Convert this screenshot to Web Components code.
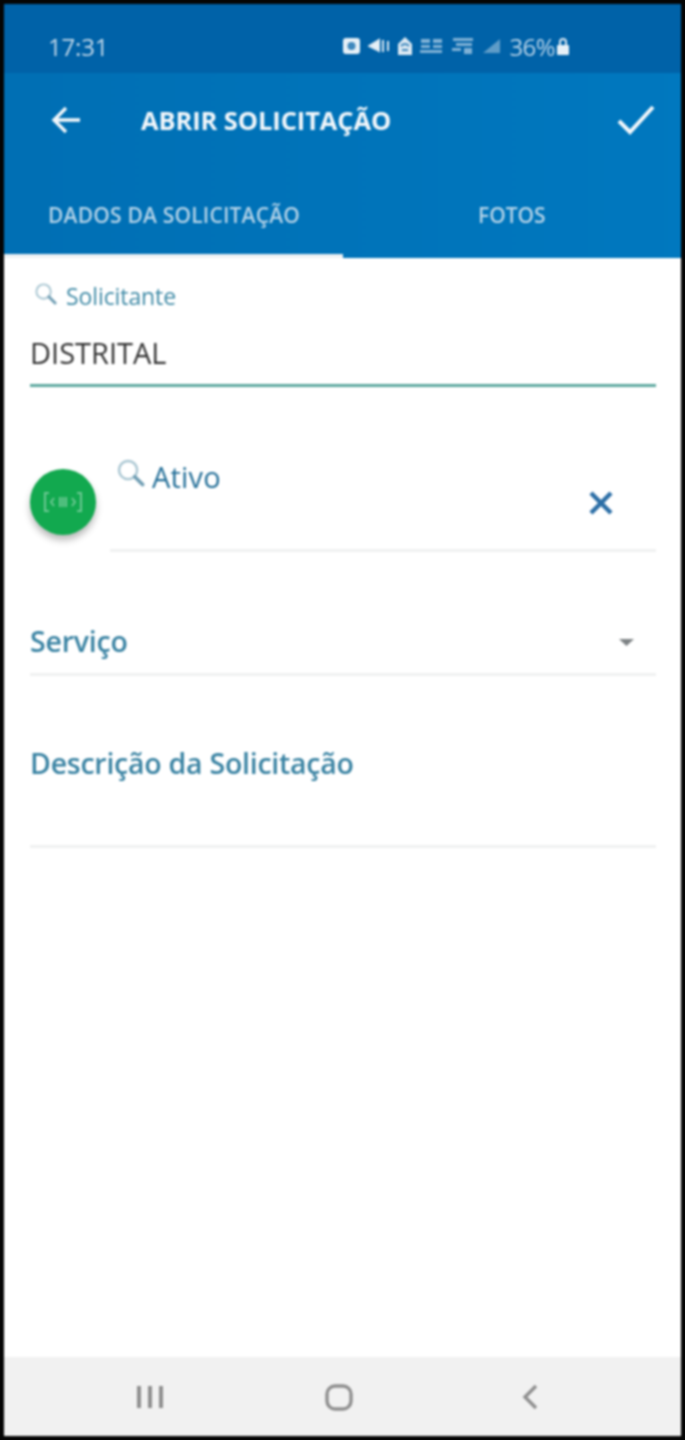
<!DOCTYPE html>
<html lang="pt">
<head>
<meta charset="utf-8">
<title>Abrir Solicitação</title>
<style>
  html, body { margin: 0; height: 100%; background: #000; }
  body { font-family: "Open Sans", "Liberation Sans", sans-serif; }
  app-screen { height: 1440px; }
</style>
</head>
<body>
<app-screen>
  <status-bar slot="header"></status-bar>
  <app-bar slot="header" title="ABRIR SOLICITAÇÃO"></app-bar>
  <tab-bar slot="header"></tab-bar>

  <form-field label="Solicitante" value="DISTRITAL"></form-field>
  <asset-field></asset-field>
  <select-field label="Serviço"></select-field>
  <text-area-field label="Descrição da Solicitação"></text-area-field>

  <nav-bar slot="footer"></nav-bar>
</app-screen>

<script>
// lupa usada nos rotulos de busca
const searchIcon = (size) => `
  <svg width="${size}" height="${size}" viewBox="0 0 24 24" fill="none" stroke-linecap="round">
    <circle cx="10" cy="10" r="7.5" stroke="#a9c6d2" stroke-width="2"/>
    <path d="M15.5 15.5 L22 22" stroke="#6f9db3" stroke-width="3"/>
  </svg>`;

class AppScreen extends HTMLElement {
  constructor() {
    super();
    const shadow = this.attachShadow({ mode: 'open' });
    shadow.innerHTML = `
      <style>
        :host {
          display: block;
          box-sizing: border-box;
          padding: 4px;
          background: #050505;
        }
        .frame {
          height: 100%;
          display: flex;
          flex-direction: column;
          /* a referencia e uma captura ampliada, toda levemente desfocada */
          filter: blur(0.9px);
        }
        .content {
          flex: 1;
          background: #fff;
          display: flex;
          flex-direction: column;
        }
      </style>
      <div class="frame">
        <slot name="header"></slot>
        <div class="content"><slot></slot></div>
        <slot name="footer"></slot>
      </div>
    `;
  }
}

class StatusBar extends HTMLElement {
  constructor() {
    super();
    const shadow = this.attachShadow({ mode: 'open' });
    shadow.innerHTML = `
      <style>
        :host {
          display: flex;
          align-items: center;
          box-sizing: border-box;
          height: 69px;
          padding: 15px 111px 0 44px;
          background: #0062a8;
          color: #c3d9ea;
          font-size: 24px;
        }
        .time { flex: 1; letter-spacing: -0.2px; }
        .icons { display: flex; align-items: center; gap: 7px; }
        svg { display: block; }
        .pct { font-size: 24px; font-weight: 500; color: #b5d2e8; letter-spacing: -0.6px; margin-left: 1px; }
      </style>
      <span class="time">17:31</span>
      <div class="icons">
        <svg width="19" height="18" viewBox="0 0 19 18"><rect x="1" y="1" width="17" height="16" rx="3" fill="#e6f0f7"/><circle cx="9.5" cy="9" r="4" fill="#3f88bd"/></svg>
        <svg width="22" height="18" viewBox="0 0 22 18"><path d="M1 9 L11 3 V14 Z M15 3 V15 M20 4 V14" stroke="#dce9f3" stroke-width="2" fill="#e6f0f7"/></svg>
        <svg width="16" height="20" viewBox="0 0 16 20"><path d="M8 1 L15 8 V19 H1 V8 Z" fill="#dce9f3"/><path d="M4 10 Q8 6 12 10 M5 14 H11" stroke="#3f88bd" stroke-width="2" fill="none"/></svg>
        <svg width="24" height="18" viewBox="0 0 24 18" fill="#7fb1d6"><rect x="1" y="2" width="9" height="4"/><rect x="13" y="2" width="9" height="4"/><rect x="1" y="8" width="9" height="3"/><rect x="13" y="8" width="9" height="3"/><rect x="0" y="13" width="22" height="3"/></svg>
        <svg width="24" height="18" viewBox="0 0 24 18" fill="#7fb1d6"><rect x="2" y="1" width="20" height="3"/><rect x="5" y="6" width="16" height="3"/><rect x="1" y="11" width="9" height="3"/><rect x="13" y="11" width="8" height="6"/></svg>
        <svg width="20" height="16" viewBox="0 0 20 16"><path d="M1 15 L18 1 V15 Z" fill="#5e9cc8"/></svg>
        <span class="pct">36%</span>
        <svg width="14" height="19" viewBox="0 0 14 19" style="margin-left:-6px"><path d="M4 8 V5 a3 3 0 0 1 6 0 V8" stroke="#dce9f3" stroke-width="2" fill="none"/><rect x="1" y="8" width="12" height="10" rx="1" fill="#e6f0f7"/></svg>
      </div>
    `;
  }
}

class AppBar extends HTMLElement {
  constructor() {
    super();
    const shadow = this.attachShadow({ mode: 'open' });
    shadow.innerHTML = `
      <style>
        :host {
          display: flex;
          align-items: center;
          box-sizing: border-box;
          height: 94px;
          padding: 0 26px 0 47px;
          background: linear-gradient(90deg, #006fb4, #0078bf);
          color: #f2f7fb;
        }
        .title {
          flex: 1;
          margin-left: 60px;
          font-size: 25.5px;
          font-weight: 700;
          letter-spacing: -0.1px;
          white-space: nowrap;
        }
        svg { display: block; }
      </style>
      <svg width="30" height="30" viewBox="0 0 30 30" fill="none" stroke="#f2f7fb" stroke-width="3.4">
        <path d="M29 15 H3 M15 3 L3 15 L15 27"/>
      </svg>
      <span class="title" id="title"></span>
      <svg width="38" height="30" viewBox="0 0 38 30" fill="none" stroke="#f2f7fb" stroke-width="4">
        <path d="M2 16 L13 27 L36 2"/>
      </svg>
    `;
  }
  connectedCallback() {
    this.shadowRoot.querySelector('#title').textContent = this.getAttribute('title') || '';
  }
}

class TabBar extends HTMLElement {
  constructor() {
    super();
    const shadow = this.attachShadow({ mode: 'open' });
    shadow.innerHTML = `
      <style>
        :host {
          display: grid;
          grid-template-columns: 339px 1fr;
          height: 91px;
          background: linear-gradient(90deg, #006fb4, #0078bf);
          color: #b4d3e8;
          font-size: 21px;
          font-weight: 600;
        }
        .tab {
          display: flex;
          align-items: center;
          box-sizing: border-box;
          white-space: nowrap;
        }
        .active {
          padding: 9px 0 0 44px;
          border-bottom: 4px solid #eef2f4;
          letter-spacing: 0.2px;
        }
        .other { padding: 5px 0 0 135px; }
      </style>
      <div class="tab active">DADOS DA SOLICITAÇÃO</div>
      <div class="tab other">FOTOS</div>
    `;
  }
}

class FormField extends HTMLElement {
  constructor() {
    super();
    const shadow = this.attachShadow({ mode: 'open' });
    shadow.innerHTML = `
      <style>
        :host { display: block; padding: 23px 25px 0 26px; }
        .label {
          display: flex;
          align-items: center;
          gap: 9px;
          margin-left: 4px;
          height: 29px;
          font-size: 23px;
          color: #3f8aa6;
          letter-spacing: -0.1px;
        }
        .value {
          margin-top: 23px;
          height: 51px;
          line-height: 40px;
          font-size: 29px;
          font-weight: 500;
          color: #333;
          border-bottom: 3px solid #5fa9a0;
        }
        svg { display: block; margin-top: -5px; }
      </style>
      <div class="label">${searchIcon(23)}<span id="label"></span></div>
      <div class="value" id="value"></div>
    `;
  }
  connectedCallback() {
    this.shadowRoot.querySelector('#label').textContent = this.getAttribute('label') || '';
    this.shadowRoot.querySelector('#value').textContent = this.getAttribute('value') || '';
  }
}

class AssetField extends HTMLElement {
  constructor() {
    super();
    const shadow = this.attachShadow({ mode: 'open' });
    shadow.innerHTML = `
      <style>
        :host {
          display: flex;
          align-items: flex-start;
          padding: 68px 25px 0 26px;
        }
        .fab {
          flex: none;
          width: 66px;
          height: 66px;
          margin-top: 14px;
          border-radius: 50%;
          background: #12a94f;
          box-shadow: 0 5px 7px rgba(0, 0, 0, .28);
          display: flex;
          align-items: center;
          justify-content: center;
        }
        .box {
          flex: 1;
          margin-left: 14px;
          height: 94px;
          position: relative;
          border-bottom: 3px solid #f0f1f1;
        }
        .label {
          display: flex;
          align-items: center;
          gap: 7px;
          margin-left: 6px;
          height: 42px;
          font-size: 29px;
          font-weight: 500;
          color: #246f98;
          letter-spacing: 0.2px;
        }
        .label svg { margin-top: -8px; }
        .clear { position: absolute; right: 42px; top: 35px; }
        svg { display: block; }
      </style>
      <div class="fab">
        <svg width="40" height="24" viewBox="0 0 40 24" fill="none" stroke="#6cc892" stroke-width="2">
          <path d="M6 3 H2 V21 H6 M34 3 H38 V21 H34"/>
          <path d="M11 8 L8 12 L11 16 M29 8 L32 12 L29 16 M17 7 V17 M20 7 V17 M23 7 V17"/>
        </svg>
      </div>
      <div class="box">
        <div class="label">${searchIcon(29)}<span>Ativo</span></div>
        <svg class="clear" width="26" height="26" viewBox="0 0 26 26" stroke="#2b6ea6" stroke-width="4.4" fill="none">
          <path d="M3 3 L23 23 M23 3 L3 23"/>
        </svg>
      </div>
    `;
  }
}

class SelectField extends HTMLElement {
  constructor() {
    super();
    const shadow = this.attachShadow({ mode: 'open' });
    shadow.innerHTML = `
      <style>
        :host {
          display: flex;
          align-items: center;
          box-sizing: border-box;
          height: 59px;
          margin: 65px 25px 0 26px;
          padding-bottom: 9px;
          border-bottom: 3px solid #f0f1f1;
          font-size: 28.5px;
          font-weight: 600;
          color: #3a83a3;
        }
        span { flex: 1; letter-spacing: -0.2px; }
        svg { display: block; margin-right: 22px; margin-top: 3px; }
      </style>
      <span id="label"></span>
      <svg width="15" height="7" viewBox="0 0 15 7"><path d="M0 0 H15 L7.5 7 Z" fill="#7d8284"/></svg>
    `;
  }
  connectedCallback() {
    this.shadowRoot.querySelector('#label').textContent = this.getAttribute('label') || '';
  }
}

class TextAreaField extends HTMLElement {
  constructor() {
    super();
    const shadow = this.attachShadow({ mode: 'open' });
    shadow.innerHTML = `
      <style>
        :host {
          display: block;
          box-sizing: border-box;
          height: 116px;
          margin: 56px 25px 0 26px;
          padding-top: 12px;
          border-bottom: 3px solid #f0f1f1;
          font-size: 28.5px;
          font-weight: 600;
          color: #3a83a3;
          letter-spacing: -0.25px;
        }
      </style>
      <span id="label"></span>
    `;
  }
  connectedCallback() {
    this.shadowRoot.querySelector('#label').textContent = this.getAttribute('label') || '';
  }
}

class NavBar extends HTMLElement {
  constructor() {
    super();
    const shadow = this.attachShadow({ mode: 'open' });
    shadow.innerHTML = `
      <style>
        :host {
          display: grid;
          grid-template-columns: 291px 88px 1fr;
          height: 79px;
          background: #f1f1f1;
        }
        div { display: flex; align-items: center; justify-content: center; padding-top: 1px; }
        svg { display: block; }
      </style>
      <div><svg width="26" height="22" viewBox="0 0 26 22" fill="#8f8f8f"><rect x="0" y="0" width="4" height="22"/><rect x="11" y="0" width="4" height="22"/><rect x="22" y="0" width="4" height="22"/></svg></div>
      <div><svg width="28" height="28" viewBox="0 0 28 28" fill="none" stroke="#8f8f8f" stroke-width="3.4"><rect x="2" y="3" width="24" height="23" rx="8"/></svg></div>
      <div style="justify-content:flex-start;padding-left:139px"><svg width="16" height="26" viewBox="0 0 16 26" fill="none" stroke="#8f8f8f" stroke-width="3.4"><path d="M14 2 L3 13 L14 24"/></svg></div>
    `;
  }
}

customElements.define('app-screen', AppScreen);
customElements.define('status-bar', StatusBar);
customElements.define('app-bar', AppBar);
customElements.define('tab-bar', TabBar);
customElements.define('form-field', FormField);
customElements.define('asset-field', AssetField);
customElements.define('select-field', SelectField);
customElements.define('text-area-field', TextAreaField);
customElements.define('nav-bar', NavBar);
</script>
</body>
</html>
